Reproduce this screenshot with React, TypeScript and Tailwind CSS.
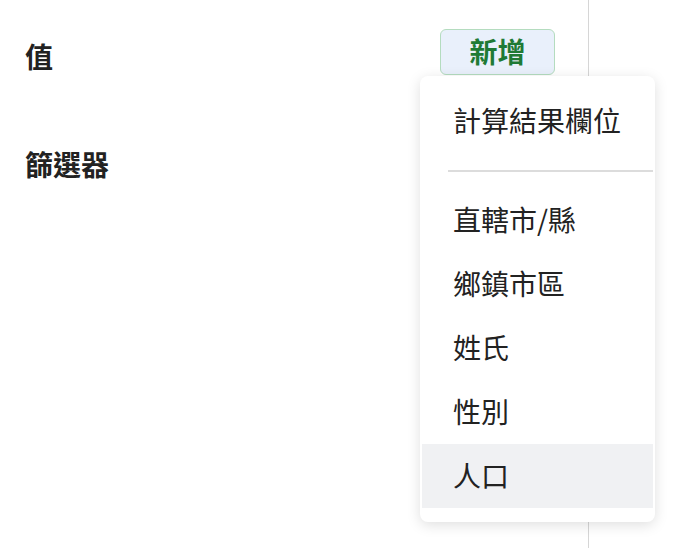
import { useState } from 'react';

const fields = ['直轄市/縣', '鄉鎮市區', '姓氏', '性別', '人口'];

export default function App() {
  const [hovered, setHovered] = useState('人口');

  return (
    <div
      className="relative w-[674px] h-[548px] bg-white text-[#222] overflow-hidden"
      style={{ fontFamily: '"Noto Sans CJK TC", "Noto Sans", sans-serif' }}
    >
      {/* 左側設定欄 */}
      <div className="w-[589px] h-full border-r border-[#d6d6d6]">
        <div className="flex items-start justify-between pl-[25px] pr-[33px] pt-[29px]">
          <div className="mt-[13px] text-[28px] leading-[28px] font-bold">值</div>
          <button className="h-[46px] w-[115px] rounded-[6px] border border-[#b4dcbf] bg-[#e9f0fb] pb-[2px] text-[28px] leading-none font-bold text-[#1f7a35]">
            新增
          </button>
        </div>
        <div className="mt-[75px] pl-[25px] text-[28px] leading-[28px] font-bold">篩選器</div>
      </div>

      {/* 下拉選單 */}
      <div className="absolute left-[420px] top-[76px] w-[235px] rounded-[8px] bg-white px-[2px] pt-[13px] pb-[14px] shadow-[0_3px_14px_rgba(0,0,0,0.13)]">
        <div className="flex h-[64px] items-center pb-[3px] pl-[31px] text-[28px]">計算結果欄位</div>
        <div className="ml-[26px] mt-[17px] mb-[16px] h-[2px] bg-[#dcdcdc]" />
        {fields.map((f) => (
          <div
            key={f}
            onMouseEnter={() => setHovered(f)}
            className={`flex h-[64px] items-center pb-[3px] pl-[31px] text-[28px] ${
              hovered === f ? 'bg-[#f0f1f3]' : ''
            }`}
          >
            {f}
          </div>
        ))}
      </div>
    </div>
  );
}
